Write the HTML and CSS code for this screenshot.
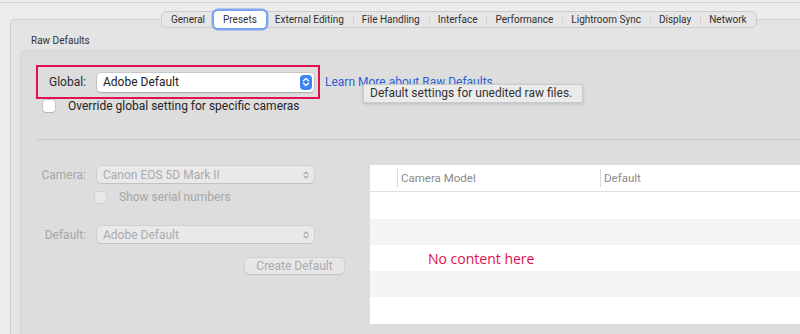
FILE: index.html
```html
<!DOCTYPE html>
<html lang="en">
<head>
    <meta charset="UTF-8">
    <title>Preferences - Presets</title>
    <link rel="stylesheet" href="styles.css">
</head>
<body>

    <div class="toolbar-edge"></div>

    <div class="tabs">
        <div class="tab">General</div>
        <div class="tab active">Presets</div>
        <div class="tab">External Editing</div>
        <div class="tab sep">File Handling</div>
        <div class="tab sep">Interface</div>
        <div class="tab sep">Performance</div>
        <div class="tab sep">Lightroom Sync</div>
        <div class="tab sep">Display</div>
        <div class="tab sep">Network</div>
    </div>

    <div class="tabview">
        <div class="group-title">Raw Defaults</div>

        <div class="group">
            <div class="global-row">
                <div class="highlight">
                    <span class="label">Global:</span>
                    <div class="popup">
                        <span>Adobe Default</span>
                        <span class="stepper">
                            <svg width="8" height="10" viewBox="0 0 8 10">
                                <path d="M1.5 3.8 L4 1.5 L6.5 3.8 M1.5 6.2 L4 8.5 L6.5 6.2" fill="none" stroke="#fff" stroke-width="1.4" stroke-linecap="round" stroke-linejoin="round"/>
                            </svg>
                        </span>
                    </div>
                </div>
                <a class="link" href="#">Learn More about Raw Defaults...</a>
            </div>

            <div class="check-row">
                <span class="checkbox"></span>
                <span>Override global setting for specific cameras</span>
            </div>

            <div class="separator"></div>

            <div class="lower">
                <div class="form">
                    <div class="form-row">
                        <span class="form-label">Camera:</span>
                        <div class="popup disabled">
                            <span>Canon EOS 5D Mark II</span>
                            <svg class="chev" width="8" height="10" viewBox="0 0 8 10">
                                <path d="M2 4 L4 2 L6 4 M2 6 L4 8 L6 6" fill="none" stroke="#a9a9a9" stroke-width="1.1" stroke-linecap="round" stroke-linejoin="round"/>
                            </svg>
                        </div>
                    </div>
                    <div class="form-row serial">
                        <span class="checkbox small"></span>
                        <span>Show serial numbers</span>
                    </div>
                    <div class="form-row default-row">
                        <span class="form-label">Default:</span>
                        <div class="popup disabled">
                            <span>Adobe Default</span>
                            <svg class="chev" width="8" height="10" viewBox="0 0 8 10">
                                <path d="M2 4 L4 2 L6 4 M2 6 L4 8 L6 6" fill="none" stroke="#a9a9a9" stroke-width="1.1" stroke-linecap="round" stroke-linejoin="round"/>
                            </svg>
                        </div>
                    </div>
                    <div class="button-row">
                        <button class="btn" disabled>Create Default</button>
                    </div>
                </div>

                <div class="table">
                    <div class="table-head">
                        <div class="th-blank"></div>
                        <div class="th model">Camera Model</div>
                        <div class="th">Default</div>
                    </div>
                    <div class="tr"></div>
                    <div class="tr alt"></div>
                    <div class="tr note">No content here</div>
                    <div class="tr alt"></div>
                    <div class="tr last"></div>
                </div>
            </div>

            <div class="tooltip">Default settings for unedited raw files.</div>
        </div>
    </div>

</body>
</html>
```

FILE: styles.css
```css
body {
    margin: 0;
    width: 800px;
    height: 334px;
    overflow: hidden;
    background-color: #ececec;
    font-family: Roboto, "Noto Sans", sans-serif;
    color: #262626;
}

.toolbar-edge {
    height: 2px;
    border-bottom: 1px solid #d4d4d4;
}

/* segmented tab control */
.tabs {
    position: relative;
    z-index: 1;
    display: inline-flex;
    margin: 8px 0 0 161px;
    height: 17px;
    box-sizing: border-box;
    border: 1px solid #cdcdcd;
    border-radius: 5px;
    background-color: #e6e6e6;
    font-size: 10px;
    color: #303030;
    white-space: nowrap;
}

.tab {
    display: flex;
    align-items: center;
    padding: 0 9px;
    position: relative;
}

.tab.sep::before {
    content: "";
    position: absolute;
    left: 0;
    top: 4px;
    bottom: 4px;
    border-left: 1px solid #cfcfcf;
}

.tab.active {
    background-color: #fff;
    border-radius: 4px;
    margin: -1px 0;
    box-shadow: 0 0 0 2.5px #7ba6ef;
}

.tabview {
    margin: -9px 0 0 10px;
    border: 1px solid #d0d0d0;
    border-right: none;
    border-bottom: none;
    border-radius: 5px 0 0 0;
    background-color: #e4e4e4;
    padding: 14px 0 0 9px;
    height: 315px;
    box-sizing: border-box;
}

.group-title {
    margin-left: 11px;
    font-size: 10px;
    line-height: 13px;
    color: #333;
}

.group {
    position: relative;
    margin-top: 3px;
    border: 1px solid #d3d3d3;
    border-right: none;
    border-bottom: none;
    border-radius: 5px 0 0 0;
    background-color: #dddddd;
    height: 283px;
    font-size: 12px;
}

.global-row {
    display: flex;
    align-items: center;
    margin: 14px 0 0 15px;
}

.highlight {
    display: flex;
    align-items: center;
    box-sizing: border-box;
    width: 284px;
    height: 34px;
    border: 2px solid #e1124f;
    padding-left: 11px;
}

.label {
    width: 48px;
    color: #2a2a2a;
}

.popup {
    display: flex;
    align-items: center;
    justify-content: space-between;
    box-sizing: border-box;
    width: 217px;
    height: 19px;
    padding: 0 2px 0 6px;
    background-color: #fff;
    border-radius: 4px;
    box-shadow: 0 0 0 0.5px rgba(0, 0, 0, 0.18), 0 1px 1.5px rgba(0, 0, 0, 0.18);
    color: #222;
}

.stepper {
    display: flex;
    align-items: center;
    justify-content: center;
    width: 12px;
    height: 15px;
    border-radius: 4px;
    background-color: #3d84f5;
}

.link {
    margin-left: 5px;
    color: #2d5fd6;
    text-decoration: none;
}

.check-row {
    display: flex;
    align-items: center;
    margin: 1px 0 0 22px;
    height: 12px;
}

.checkbox {
    width: 12px;
    height: 12px;
    box-sizing: border-box;
    margin-right: 13px;
    background-color: #fff;
    border-radius: 3px;
    box-shadow: 0 0 0 0.5px rgba(0, 0, 0, 0.2), 0 1px 1px rgba(0, 0, 0, 0.1);
}

.separator {
    margin: 27px 0 0 15px;
    height: 1px;
    background-color: #c9c9c9;
}

.lower {
    display: flex;
    margin-top: 25px;
}

.form {
    width: 349px;
    flex-shrink: 0;
    color: #a6a6a6;
}

.form-row {
    display: flex;
    align-items: center;
}

.form-row:first-child {
    margin-top: 1px;
}

.form-label {
    width: 65px;
    margin-right: 11px;
    text-align: right;
}

.popup.disabled {
    height: 17px;
    background-color: #e9e9e9;
    color: #ababab;
    box-shadow: 0 0 0 0.5px rgba(0, 0, 0, 0.1), 0 1px 1px rgba(0, 0, 0, 0.08);
    padding-right: 4px;
}

.serial {
    margin: 8px 0 0 74px;
    height: 12px;
}

.checkbox.small {
    width: 11px;
    height: 11px;
    margin-right: 13px;
    background-color: #e8e8e8;
    box-shadow: 0 0 0 0.5px rgba(0, 0, 0, 0.1);
}

.default-row {
    margin-top: 23px;
}

.button-row {
    margin: 15px 0 0 224px;
}

.btn {
    width: 99px;
    height: 16px;
    padding: 0;
    border: none;
    border-radius: 4px;
    background-color: #e7e7e7;
    box-shadow: 0 0 0 0.5px rgba(0, 0, 0, 0.12), 0 1px 1px rgba(0, 0, 0, 0.08);
    font-family: inherit;
    font-size: 12px;
    color: #ababab;
}

/* camera table */
.table {
    flex: 1;
    background-color: #fff;
}

.table-head {
    display: flex;
    align-items: center;
    height: 26px;
    border-bottom: 1px solid #dedede;
    font-size: 11.5px;
    color: #8a8a8a;
}

.th-blank {
    width: 27px;
}

.th {
    display: flex;
    align-items: center;
    height: 18px;
    border-left: 1px solid #dadada;
    padding-left: 3px;
}

.th.model {
    width: 199px;
}

.tr {
    height: 26px;
}

.tr:nth-child(2),
.tr.last {
    height: 27px;
}

.tr.alt {
    background-color: #f4f4f4;
}

.tr.note {
    display: flex;
    align-items: center;
    padding-left: 58px;
    font-family: "Open Sans", sans-serif;
    font-size: 14px;
    color: #e0104f;
}

.tooltip {
    position: absolute;
    left: 342px;
    top: 33px;
    box-sizing: border-box;
    width: 220px;
    height: 19px;
    padding-left: 6px;
    line-height: 17px;
    white-space: nowrap;
    background-color: #ebebeb;
    border: 1px solid #cacaca;
    box-shadow: 0 1px 3px rgba(0, 0, 0, 0.15);
    color: #333;
    font-size: 12px;
}
```
